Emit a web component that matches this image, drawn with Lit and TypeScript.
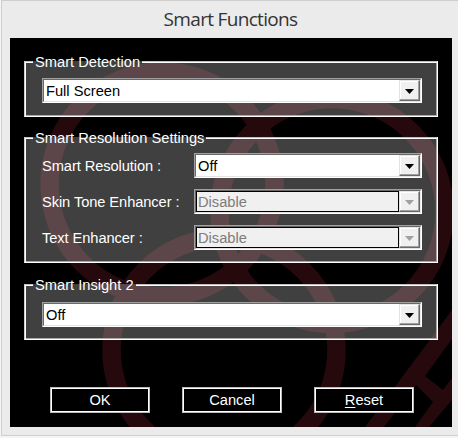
import { LitElement, html, css, svg } from "lit";
import { customElement, property } from "lit/decorators.js";

@customElement("combo-box")
class ComboBox extends LitElement {
  @property() value = "";
  @property({ type: Boolean, reflect: true }) disabled = false;

  static styles = css`
    :host { display: flex; box-sizing: border-box; height: 25px; border: 1px solid; border-color: #a0a0a0 #fff #fff #a0a0a0; background: #fff; color: #000; }
    .inner { flex: 1; display: flex; box-sizing: border-box; border: 1px solid; border-color: #696969 #e8e8e8 #e3e3e3 #696969; }
    .value { flex: 1; padding-left: 2px; line-height: 22px; height: 21px; box-sizing: border-box; white-space: nowrap; }
    .arrow { box-sizing: border-box; width: 21px; height: 21px; display: flex; align-items: center; justify-content: center; background: #f0f0f0; border: 1px solid; border-color: #e3e3e3 #696969 #696969 #e3e3e3; box-shadow: inset -1px -1px #a0a0a0, inset 1px 1px #fff; }
    svg { display: block; margin-top: 2px; }
    path { fill: #000; }
    :host([disabled]) .value { border: 1px solid #000; background: #f0f0f0; color: #7c7c7c; line-height: 20px; padding-left: 1px; }
    :host([disabled]) path { fill: #a0a0a0; }
  `;

  render() {
    return html`<div class="inner">
      <div class="value">${this.value}</div>
      <div class="arrow"><svg width="9" height="5" viewBox="0 0 9 5"><path d="M0 0H9L4.5 5Z" /></svg></div>
    </div>`;
  }
}

@customElement("group-box")
class GroupBox extends LitElement {
  @property() label = "";

  static styles = css`
    :host { display: block; position: relative; box-sizing: border-box; background: rgba(255, 255, 255, 0.25); border: solid #fff; border-width: 0 1px 1px; border-left-color: #d0d0d0; box-shadow: inset 1px 0 #fff, inset -1px -1px #a8a8a8; }
    .caption { display: flex; height: 2px; align-items: center; }
    .caption::before, .caption::after { content: ""; height: 2px; background: linear-gradient(#c0c0c0 50%, #fff 50%); }
    .caption::before { width: 8px; }
    .caption::after { flex: 1; }
    .label { padding: 0 2px; line-height: 18px; white-space: nowrap; }
    .body { display: flex; flex-direction: column; padding: 0 15px 0 17px; }
  `;

  render() {
    return html`<div class="caption"><span class="label">${this.label}</span></div>
      <div class="body"><slot></slot></div>`;
  }
}

@customElement("app-root")
class AppRoot extends LitElement {
  static styles = css`
    :host { display: block; width: 458px; height: 438px; overflow: hidden; background: #f4f4f4; }
    .window { box-sizing: border-box; width: 457px; height: 436px; margin-left: 1px; padding: 0 4px 8px 8px; background: #ebebeb; border: 1px solid #cfcfcf; border-right: 0; }
    .title { height: 37px; padding-right: 3px; text-align: center; font: 19px/37px "Open Sans", "Noto Sans", sans-serif; color: #333; letter-spacing: -0.68px; }
    .client { position: relative; box-sizing: border-box; width: 442px; height: 389px; background: #000; padding: 23px 14px 0; font: 14.67px "Liberation Sans", Arial, sans-serif; color: #fff; overflow: hidden; }
    .backdrop { position: absolute; inset: 0; }
    .detect { height: 56px; }
    .detect combo-box { margin-top: 15px; }
    .resolution { height: 126px; margin-top: 20px; }
    .insight { height: 56px; margin-top: 21px; }
    .insight combo-box { margin-top: 16px; }
    .row { display: flex; align-items: center; height: 25px; margin-bottom: 11px; }
    .row:first-child { margin-top: 14px; }
    .row span { width: 152px; white-space: nowrap; letter-spacing: -0.08px; }
    .row combo-box { flex: 1; }
    .buttons { position: relative; display: flex; gap: 32px; margin: 47px 0 0 26px; }
    button { box-sizing: border-box; width: 100px; height: 26px; padding: 0; border: 1px solid #bbb; box-shadow: inset 0 0 0 1px #fff; background: #000; color: #fff; font: inherit; line-height: 22px; }
    .key { text-decoration: underline; text-underline-offset: 2px; text-decoration-thickness: 1px; }
  `;

  render() {
    const rings = [[152, 146], [322, 173.5], [214, 312]];
    return html`<div class="window">
      <div class="title">Smart Functions</div>
      <div class="client">
        <svg class="backdrop" width="442" height="389" fill="none" stroke="#26090c" stroke-width="18.5">
          ${rings.map(([x, y]) => svg`<circle cx=${x} cy=${y} r="112.5" />`)}
          <path fill="#26090c" stroke="none" d="M442 272V301L415 338L433 352L442 340V362L419 389H405L423 364L406 347L374 389H355Z" />
        </svg>
        <group-box class="detect" label="Smart Detection"><combo-box value="Full Screen"></combo-box></group-box>
        <group-box class="resolution" label="Smart Resolution Settings">
          <div class="row"><span>Smart Resolution :</span><combo-box value="Off"></combo-box></div>
          <div class="row"><span>Skin Tone Enhancer :</span><combo-box value="Disable" disabled></combo-box></div>
          <div class="row"><span>Text Enhancer :</span><combo-box value="Disable" disabled></combo-box></div>
        </group-box>
        <group-box class="insight" label="Smart Insight 2"><combo-box value="Off"></combo-box></group-box>
        <div class="buttons">
          <button>OK</button><button>Cancel</button><button><span class="key">R</span>eset</button>
        </div>
      </div>
    </div>`;
  }
}
